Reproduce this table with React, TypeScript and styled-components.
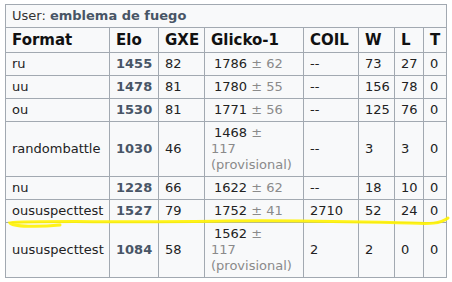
import React from "react";
import styled, { createGlobalStyle } from "styled-components";

const Global = createGlobalStyle`
  html, body { margin: 0; padding: 0; background: #ffffff; }
  body { font-family: "DejaVu Sans", Verdana, sans-serif; }
`;

const Page = styled.div`
  position: relative;
  padding: 4px 0 0 5px;
  width: 452px;
  height: 282px;
  box-sizing: border-box;
`;

const Table = styled.table`
  border-collapse: collapse;
  table-layout: fixed;
  width: 442px;
  background: #f8f9fa;
  color: #222;
  font-size: 13px;
  line-height: 16px;
  border: 1px solid #a2a9b1;
`;

const Cell = styled.td<{ $elo?: boolean }>`
  border: 1px solid #a2a9b1;
  padding: 3px 6px 3px 6px;
  vertical-align: middle;
  text-align: left;
  font-weight: ${(p) => (p.$elo ? "bold" : "normal")};
  color: ${(p) => (p.$elo ? "#485566" : "#222")};
  white-space: normal;
`;

const GlickoCell = styled(Cell)`
  text-indent: 3px;
`;

const Head = styled.th`
  border: 1px solid #a2a9b1;
  padding: 3px 6px;
  font-size: 15px;
  line-height: 18px;
  font-weight: bold;
  text-align: left;
  color: #111;
`;

const UserHead = styled.th`
  border: 1px solid #a2a9b1;
  padding: 3px 6px;
  font-weight: normal;
  text-align: left;
  color: #333;
`;

const UserName = styled.strong`
  color: #485566;
`;

const Dev = styled.span`
  color: #8a8a8a;
`;

const Highlight = styled.svg`
  position: absolute;
  left: 0;
  top: 0;
  pointer-events: none;
`;

type Row = {
  format: string;
  elo: string;
  gxe: string;
  glicko: string;
  dev: string;
  provisional?: boolean;
  coil: string;
  w: string;
  l: string;
  t: string;
};

const rows: Row[] = [
  { format: "ru", elo: "1455", gxe: "82", glicko: "1786", dev: "62", coil: "--", w: "73", l: "27", t: "0" },
  { format: "uu", elo: "1478", gxe: "81", glicko: "1780", dev: "55", coil: "--", w: "156", l: "78", t: "0" },
  { format: "ou", elo: "1530", gxe: "81", glicko: "1771", dev: "56", coil: "--", w: "125", l: "76", t: "0" },
  { format: "randombattle", elo: "1030", gxe: "46", glicko: "1468", dev: "117", provisional: true, coil: "--", w: "3", l: "3", t: "0" },
  { format: "nu", elo: "1228", gxe: "66", glicko: "1622", dev: "62", coil: "--", w: "18", l: "10", t: "0" },
  { format: "oususpecttest", elo: "1527", gxe: "79", glicko: "1752", dev: "41", coil: "2710", w: "52", l: "24", t: "0" },
  { format: "uususpecttest", elo: "1084", gxe: "58", glicko: "1562", dev: "117", provisional: true, coil: "2", w: "2", l: "0", t: "0" },
];

const widths = [104, 49, 46, 99, 55, 36, 29, 23];

export default function App() {
  return (
    <Page>
      <Global />
      <Table>
        <colgroup>
          {widths.map((w, i) => (
            <col key={i} style={{ width: w }} />
          ))}
        </colgroup>
        <thead>
          <tr>
            <UserHead colSpan={8}>
              User: <UserName>emblema de fuego</UserName>
            </UserHead>
          </tr>
          <tr>
            <Head>Format</Head>
            <Head>Elo</Head>
            <Head>GXE</Head>
            <Head>Glicko-1</Head>
            <Head>COIL</Head>
            <Head>W</Head>
            <Head>L</Head>
            <Head>T</Head>
          </tr>
        </thead>
        <tbody>
          {rows.map((r) => (
            <tr key={r.format}>
              <Cell>{r.format}</Cell>
              <Cell $elo>{r.elo}</Cell>
              <Cell>{r.gxe}</Cell>
              <GlickoCell>
                {r.provisional ? (
                  <>
                    {r.glicko} <Dev>±</Dev>
                    <br />
                    <Dev>
                      {r.dev}
                      <br />
                      (provisional)
                    </Dev>
                  </>
                ) : (
                  <>
                    {r.glicko} <Dev>± {r.dev}</Dev>
                  </>
                )}
              </GlickoCell>
              <Cell>{r.coil}</Cell>
              <Cell>{r.w}</Cell>
              <Cell>{r.l}</Cell>
              <Cell>{r.t}</Cell>
            </tr>
          ))}
        </tbody>
      </Table>
      <Highlight width="452" height="282" viewBox="0 0 452 282">
        <path
          d="M60 225 C 40 227, 12 227, 10 223 C 30 220, 120 223, 226 221 C 300 220, 360 222, 410 223 C 430 224, 440 224, 448 218"
          fill="none"
          stroke="#fff200"
          strokeWidth="3"
          strokeLinecap="round"
          opacity="0.9"
        />
      </Highlight>
    </Page>
  );
}
